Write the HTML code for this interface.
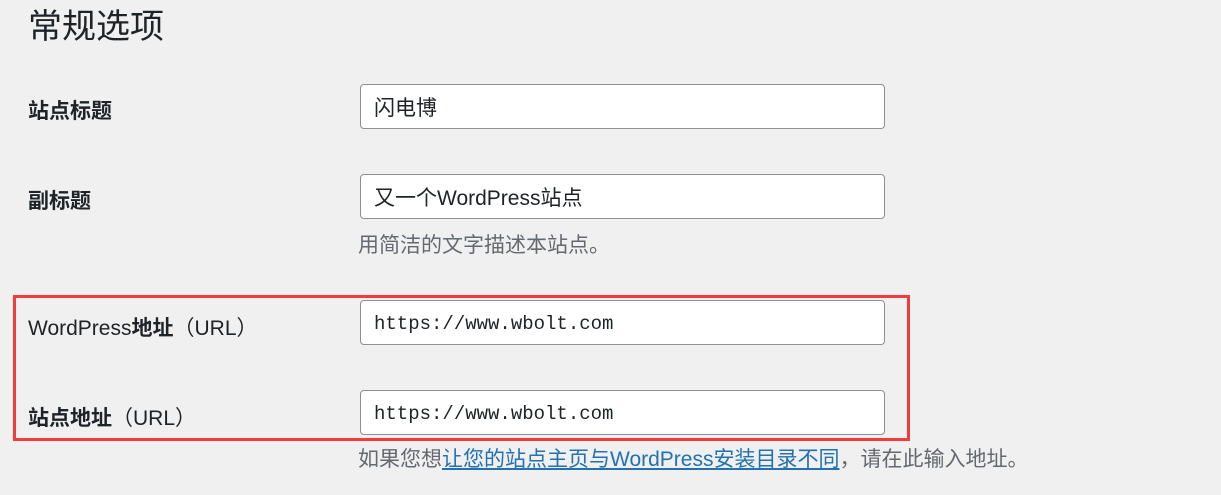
<!DOCTYPE html>
<html><head><meta charset="utf-8"><style>
body{margin:0;width:1221px;height:495px;background:#f0f0f1;font-family:"Liberation Sans","Noto Sans CJK SC",sans-serif;color:#1d2327;position:relative;overflow:hidden}
.a{position:absolute;white-space:nowrap}
h1{position:absolute;left:28px;top:3px;margin:0;font-weight:400;font-size:34px;line-height:48px;font-family:"Liberation Sans","Noto Sans CJK SC",sans-serif}
.l{font-weight:bold;font-size:21px;left:28px}
.l span{font-weight:normal;font-size:21px}
.in{position:absolute;left:360px;height:43px;background:#fff;border:1px solid #8c8f94;border-radius:4px;box-sizing:content-box;font-size:21px;line-height:47px;padding-left:13px;width:510px}
.m{font-family:"Liberation Mono","DejaVu Sans Mono",monospace;font-size:19px;line-height:46px}
.d{color:#646970;font-size:21px;left:358px}
a{color:#2271b1;text-decoration:underline}
.box{position:absolute;left:13px;top:295px;width:891px;height:140px;border:3px solid #f23c3c}
</style></head><body>
<h1>常规选项</h1>
<div class="a l" style="top:95px">站点标题</div>
<div class="in" style="top:84px">闪电博</div>
<div class="a l" style="top:185px">副标题</div>
<div class="in" style="top:174px">又一个WordPress站点</div>
<div class="a d" style="top:229px">用简洁的文字描述本站点。</div>
<div class="a l" style="top:312px"><span>WordPress</span>地址<span>（URL）</span></div>
<div class="in m" style="top:300px">https://www.wbolt.com</div>
<div class="a l" style="top:402px">站点地址<span>（URL）</span></div>
<div class="in m" style="top:390px">https://www.wbolt.com</div>
<div class="box"></div>
<div class="a d" style="top:443px">如果您想<a>让您的站点主页与WordPress安装目录不同</a>，请在此输入地址。</div>
</body></html>
